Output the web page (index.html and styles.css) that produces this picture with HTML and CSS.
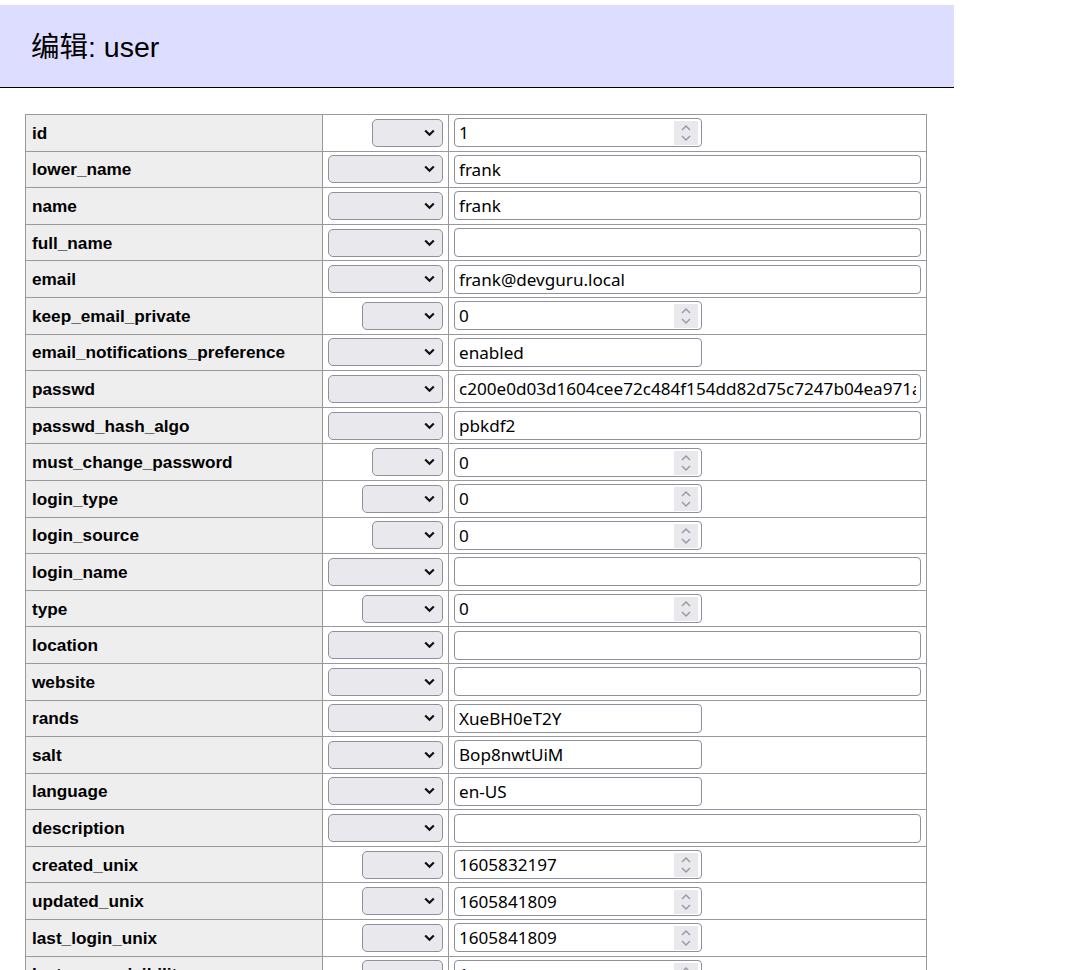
FILE: index.html
```html
<!DOCTYPE html>
<html lang="zh">
<head>
<meta charset="utf-8">
<title>编辑: user</title>
<link rel="stylesheet" href="styles.css">
</head>
<body>
<div class="page">
  <h2 class="title">编辑: user</h2>
  <form>
    <table class="edit">
      <colgroup><col class="c-name"><col class="c-fn"><col class="c-val"></colgroup>
      <tbody>
        <tr><th>id</th><td class="fn"><select class="sel-s"></select></td><td><input class="num" type="number" value="1"></td></tr>
        <tr><th>lower_name</th><td class="fn"><select class="sel-w"></select></td><td><input class="wide" type="text" value="frank"></td></tr>
        <tr><th>name</th><td class="fn"><select class="sel-w"></select></td><td><input class="wide" type="text" value="frank"></td></tr>
        <tr><th>full_name</th><td class="fn"><select class="sel-w"></select></td><td><input class="wide" type="text" value=""></td></tr>
        <tr><th>email</th><td class="fn"><select class="sel-w"></select></td><td><input class="wide" type="text" value="frank@devguru.local"></td></tr>
        <tr><th>keep_email_private</th><td class="fn"><select class="sel-m"></select></td><td><input class="num" type="number" value="0"></td></tr>
        <tr><th>email_notifications_preference</th><td class="fn"><select class="sel-w"></select></td><td><input class="short" type="text" value="enabled"></td></tr>
        <tr><th>passwd</th><td class="fn"><select class="sel-w"></select></td><td><input class="wide" type="text" value="c200e0d03d1604cee72c484f154dd82d75c7247b04ea971a2f0ec1ea8af9b5c0d6e1d15b6b0cdd3de1c36a27ff2c6d5b1f7a"></td></tr>
        <tr><th>passwd_hash_algo</th><td class="fn"><select class="sel-w"></select></td><td><input class="wide" type="text" value="pbkdf2"></td></tr>
        <tr><th>must_change_password</th><td class="fn"><select class="sel-s"></select></td><td><input class="num" type="number" value="0"></td></tr>
        <tr><th>login_type</th><td class="fn"><select class="sel-m"></select></td><td><input class="num" type="number" value="0"></td></tr>
        <tr><th>login_source</th><td class="fn"><select class="sel-s"></select></td><td><input class="num" type="number" value="0"></td></tr>
        <tr><th>login_name</th><td class="fn"><select class="sel-w"></select></td><td><input class="wide" type="text" value=""></td></tr>
        <tr><th>type</th><td class="fn"><select class="sel-m"></select></td><td><input class="num" type="number" value="0"></td></tr>
        <tr><th>location</th><td class="fn"><select class="sel-w"></select></td><td><input class="wide" type="text" value=""></td></tr>
        <tr><th>website</th><td class="fn"><select class="sel-w"></select></td><td><input class="wide" type="text" value=""></td></tr>
        <tr><th>rands</th><td class="fn"><select class="sel-w"></select></td><td><input class="short" type="text" value="XueBH0eT2Y"></td></tr>
        <tr><th>salt</th><td class="fn"><select class="sel-w"></select></td><td><input class="short" type="text" value="Bop8nwtUiM"></td></tr>
        <tr><th>language</th><td class="fn"><select class="sel-w"></select></td><td><input class="short" type="text" value="en-US"></td></tr>
        <tr><th>description</th><td class="fn"><select class="sel-w"></select></td><td><input class="wide" type="text" value=""></td></tr>
        <tr><th>created_unix</th><td class="fn"><select class="sel-m"></select></td><td><input class="num" type="number" value="1605832197"></td></tr>
        <tr><th>updated_unix</th><td class="fn"><select class="sel-m"></select></td><td><input class="num" type="number" value="1605841809"></td></tr>
        <tr><th>last_login_unix</th><td class="fn"><select class="sel-m"></select></td><td><input class="num" type="number" value="1605841809"></td></tr>
        <tr><th>last_repo_visibility</th><td class="fn"><select class="sel-m"></select></td><td><input class="num" type="number" value="1"></td></tr>
        <tr><th>max_repo_creation</th><td class="fn"><select class="sel-m"></select></td><td><input class="num" type="number" value="-1"></td></tr>
        <tr><th>is_active</th><td class="fn"><select class="sel-m"></select></td><td><input class="num" type="number" value="1"></td></tr>
      </tbody>
    </table>
  </form>
</div>
</body>
</html>
```
FILE: styles.css
```css
html, body {
  margin: 0;
  background: #fff;
  color: #000;
  font-family: "Liberation Sans", Arial, "Noto Sans CJK SC", sans-serif;
}

.page {
  padding-top: 5px;
  width: 954px;
}

.title {
  box-sizing: border-box;
  height: 83px;
  margin: 0;
  padding: 25px 0 0 31px;
  background: #ddf;
  border-bottom: 1px solid #000;
  font-weight: normal;
  font-size: 28.5px;
  line-height: 34px;
  font-family: "Liberation Sans", Arial, "Noto Sans CJK SC", sans-serif;
}

form {
  margin: 0;
}

.edit {
  margin: 26px 0 0 25px;
  border-collapse: collapse;
  table-layout: fixed;
  width: 901px;
  font-size: 17.2px;
}

.c-name { width: 297px; }
.c-fn { width: 126px; }
.c-val { width: 478px; }

.edit th,
.edit td {
  border: 1px solid #999;
  padding: 3.3px 5px;
  vertical-align: middle;
}

.edit th {
  background: #eee;
  text-align: left;
  font-weight: bold;
  white-space: nowrap;
  overflow: hidden;
  padding-left: 6px;
  line-height: 20px;
}

.fn select {
  display: block;
  margin-left: auto;
  box-sizing: border-box;
  height: 28px;
  -webkit-appearance: none;
  appearance: none;
  border: 1px solid #8f8f9d;
  border-radius: 5px;
  background-color: #e9e9ed;
  background-image: url("data:image/svg+xml;utf8,<svg xmlns='http://www.w3.org/2000/svg' width='11' height='8' viewBox='0 0 11 8'><path d='M1.2 1.5 L5.5 5.8 L9.8 1.5' fill='none' stroke='%23111' stroke-width='2.2'/></svg>");
  background-repeat: no-repeat;
  background-position: right 7px center;
  font-family: "Noto Sans", sans-serif;
  font-size: 17px;
}

.sel-w { width: 115px; }
.sel-m { width: 81px; }
.sel-s { width: 71px; }

.edit input {
  display: block;
  box-sizing: border-box;
  height: 29px;
  margin: 0;
  padding: 0 4px;
  border: 1px solid #8f8f9d;
  border-radius: 4px;
  background-color: #fff;
  color: #000;
  font-family: "Noto Sans", "Open Sans", sans-serif;
  font-size: 17.1px;
  outline: none;
}

.edit input.wide { width: 467px; }
.edit input.short { width: 248px; }

.edit input.num {
  width: 248px;
  padding-right: 30px;
  -moz-appearance: textfield;
  appearance: textfield;
  background-image: url("data:image/svg+xml;utf8,<svg xmlns='http://www.w3.org/2000/svg' width='24' height='24' viewBox='0 0 24 24'><rect width='24' height='24' fill='%23e9e9ed'/><path d='M8 9 L12 5 L16 9 M8 15 L12 19 L16 15' fill='none' stroke='%239a9aa6' stroke-width='1.5'/></svg>");
  background-repeat: no-repeat;
  background-position: right 3px top 2px;
}

.edit input.num::-webkit-inner-spin-button,
.edit input.num::-webkit-outer-spin-button {
  -webkit-appearance: none;
  margin: 0;
}
```
